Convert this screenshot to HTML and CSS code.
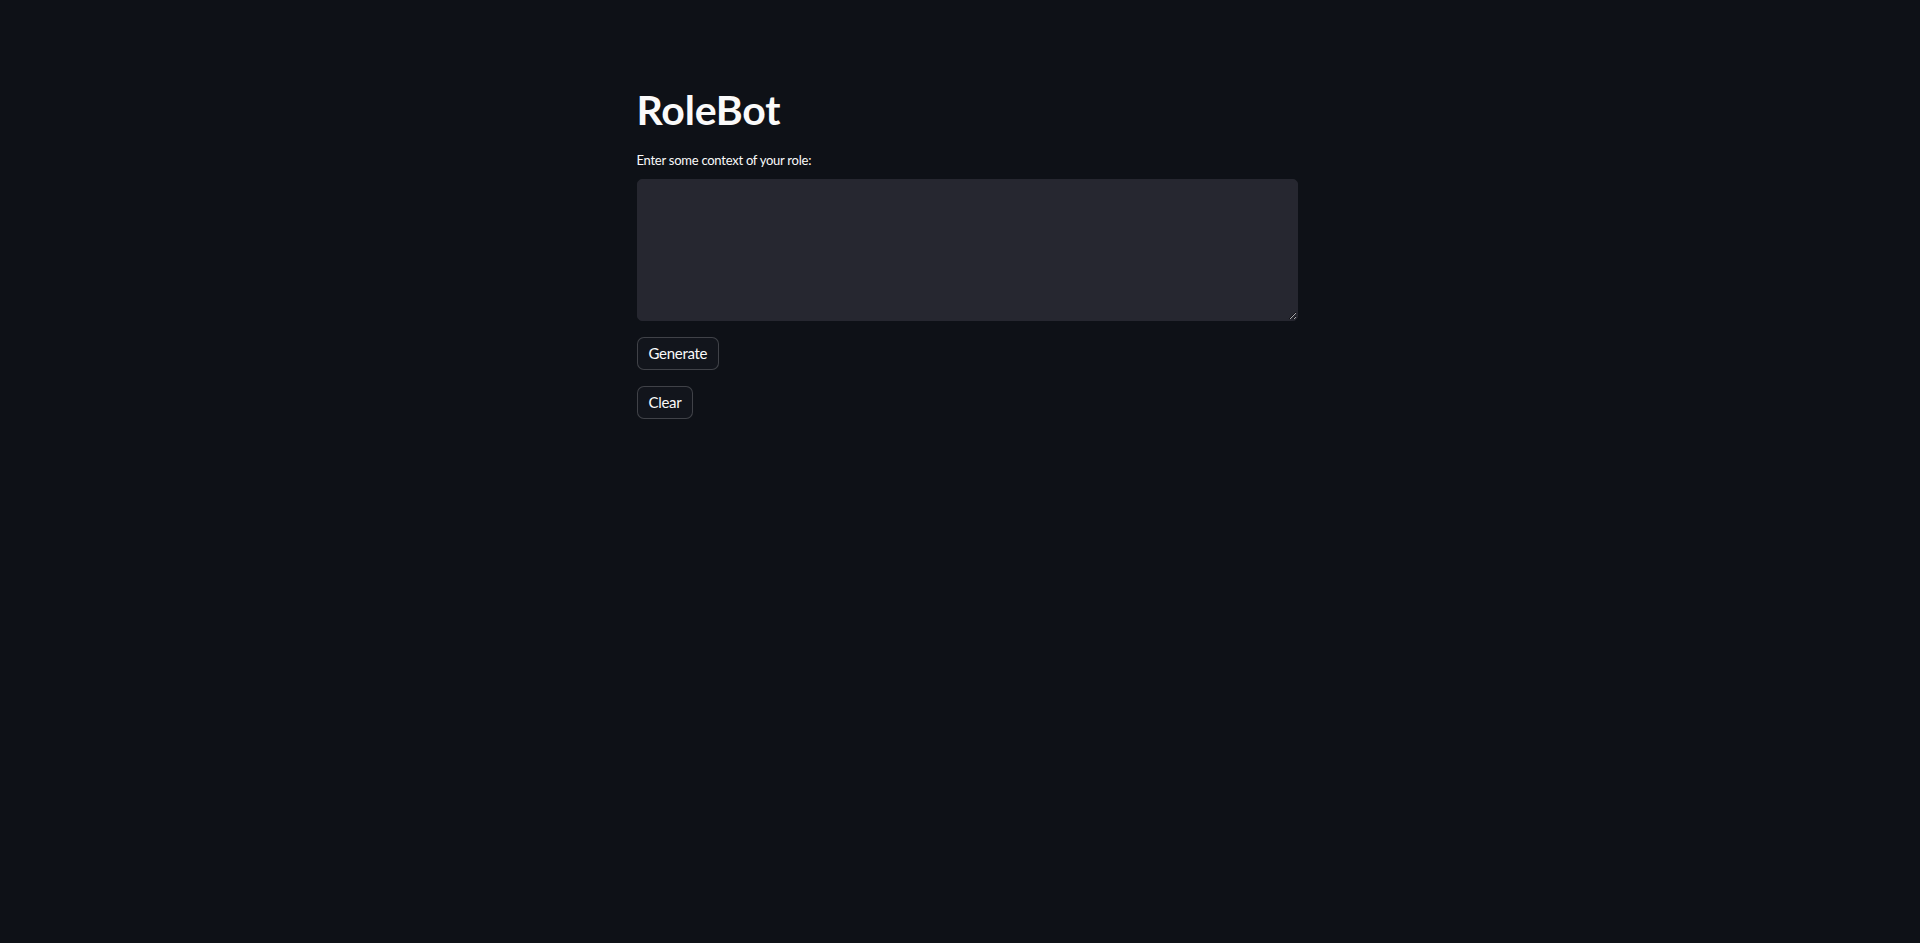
FILE: index.html
```html
<!DOCTYPE html>
<html lang="en">
<head>
<meta charset="utf-8">
<title>RoleBot</title>
<link rel="stylesheet" href="styles.css">
</head>
<body>
<div class="app">
  <main class="block">
    <h1 class="title">RoleBot</h1>
    <label class="field-label" for="ctx">Enter some context of your role:</label>
    <textarea id="ctx" class="ctx"></textarea>
    <div class="actions">
      <button class="btn" type="button">Generate</button>
      <button class="btn" type="button">Clear</button>
    </div>
  </main>
</div>
</body>
</html>
```
FILE: styles.css
```css
html, body {
  margin: 0;
  padding: 0;
  background: #0e1117;
  color: #fafafa;
  font-family: Lato, "Noto Sans", sans-serif;
}

.app {
  min-height: 100vh;
  display: flex;
  justify-content: center;
  padding-left: 14px;
  box-sizing: border-box;
}

.block {
  width: 661px;
  padding-top: 84px;
  display: flex;
  flex-direction: column;
  align-items: flex-start;
}

.title {
  margin: 0;
  font-size: 41px;
  font-weight: 700;
  line-height: 52px;
  letter-spacing: -0.2px;
}

.field-label {
  margin-top: 15px;
  font-size: 13px;
  line-height: 18px;
  height: 18px;
  letter-spacing: -0.25px;
}

.ctx {
  margin-top: 10px;
  width: 100%;
  height: 142px;
  box-sizing: border-box;
  background: #262730;
  border: 1px solid #262730;
  border-radius: 5px;
  color: #fafafa;
  font: inherit;
  font-size: 15px;
  padding: 12px;
  resize: vertical;
  outline: none;
}

.actions {
  margin-top: 16px;
  display: flex;
  flex-direction: column;
  align-items: flex-start;
  gap: 16px;
}

.btn {
  height: 33px;
  padding: 0 11px;
  background: #12151c;
  border: 1px solid rgba(250, 250, 250, 0.2);
  border-radius: 7px;
  color: #fafafa;
  font-family: inherit;
  font-size: 15px;
  letter-spacing: -0.3px;
  line-height: 1;
  cursor: pointer;
}
```
